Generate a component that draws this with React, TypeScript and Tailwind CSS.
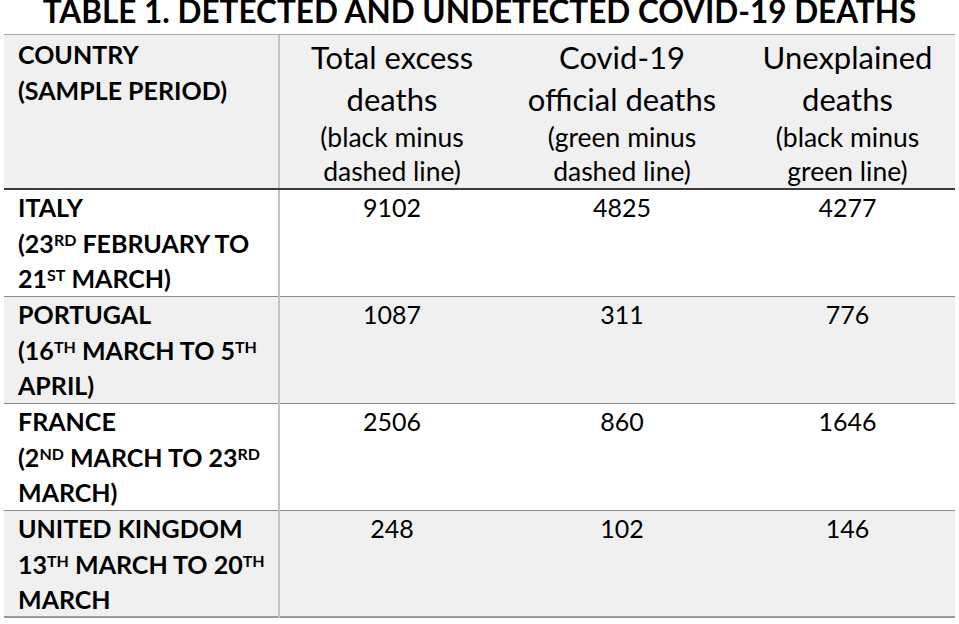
const font = { fontFamily: 'Lato, "Open Sans", sans-serif' };

type Part = string | { sup: string };

const rows: { label: Part[][]; values: string[]; shaded: boolean }[] = [
  {
    label: [['ITALY'], ['(23', { sup: 'RD' }, ' FEBRUARY TO'], ['21', { sup: 'ST' }, ' MARCH)']],
    values: ['9102', '4825', '4277'],
    shaded: false,
  },
  {
    label: [['PORTUGAL'], ['(16', { sup: 'TH' }, ' MARCH TO 5', { sup: 'TH' }], ['APRIL)']],
    values: ['1087', '311', '776'],
    shaded: true,
  },
  {
    label: [['FRANCE'], ['(2', { sup: 'ND' }, ' MARCH TO 23', { sup: 'RD' }], ['MARCH)']],
    values: ['2506', '860', '1646'],
    shaded: false,
  },
  {
    label: [['UNITED KINGDOM'], ['13', { sup: 'TH' }, ' MARCH TO 20', { sup: 'TH' }], ['MARCH']],
    values: ['248', '102', '146'],
    shaded: true,
  },
];

const headers = [
  { big: ['Total excess', 'deaths'], small: ['(black minus', 'dashed line)'] },
  { big: ['Covid-19', 'official deaths'], small: ['(green minus', 'dashed line)'] },
  { big: ['Unexplained', 'deaths'], small: ['(black minus', 'green line)'] },
];

const cols = 'grid grid-cols-[276px_224px_236px_215px]';

function Line({ parts }: { parts: Part[] }) {
  return (
    <div className="whitespace-nowrap">
      {parts.map((p, i) =>
        typeof p === 'string' ? (
          <span key={i}>{p}</span>
        ) : (
          <sup key={i} className="text-[16px] relative top-[-7px] align-baseline">
            {p.sup}
          </sup>
        ),
      )}
    </div>
  );
}

export default function App() {
  return (
    <div className="w-[959px] h-[624px] bg-white text-black overflow-hidden" style={font}>
      <h1 className="text-center font-bold text-[31.5px] leading-[22px] pb-[12px] whitespace-nowrap">
        TABLE 1. DETECTED AND UNDETECTED COVID-19 DEATHS
      </h1>

      <div className="ml-[4px] w-[951px] border-t border-[#a8a8a8]">
        {/* header */}
        <div className={`${cols} bg-[#f0f0f0] h-[155px] border-b-2 border-[#3c3c3c]`}>
          <div className="pl-[14px] pt-[1px] font-bold text-[25px] leading-[36px] border-r-2 border-[#c4c4c4]">
            <div>COUNTRY</div>
            <div>(SAMPLE PERIOD)</div>
          </div>
          {headers.map((h, i) => (
            <div key={i} className="text-center pt-[1px]">
              {h.big.map((t) => (
                <div key={t} className="text-[31px] leading-[42px] whitespace-nowrap">
                  {t}
                </div>
              ))}
              {h.small.map((t) => (
                <div key={t} className="text-[26.5px] leading-[34px] whitespace-nowrap">
                  {t}
                </div>
              ))}
            </div>
          ))}
        </div>

        {rows.map((r, i) => (
          <div
            key={i}
            className={`${cols} h-[107px] border-b border-[#8c8c8c] ${r.shaded ? 'bg-[#f0f0f0]' : 'bg-white'} ${
              i === rows.length - 1 ? 'border-b-2 border-[#9a9a9a]' : ''
            }`}
          >
            <div className="pl-[14px] font-bold text-[25px] leading-[35.5px] border-r-2 border-[#c4c4c4]">
              {r.label.map((l, j) => (
                <Line key={j} parts={l} />
              ))}
            </div>
            {r.values.map((v, j) => (
              <div key={j} className="text-center text-[25px] leading-[35.5px]">
                {v}
              </div>
            ))}
          </div>
        ))}
      </div>
    </div>
  );
}
